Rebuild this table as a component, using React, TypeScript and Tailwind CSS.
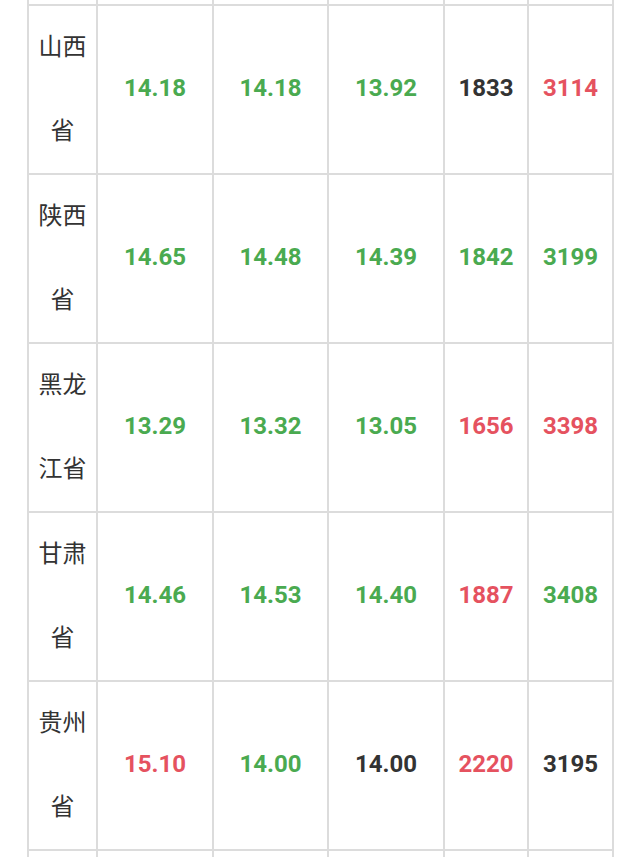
import React from "react";

type C = "g" | "r" | "d";
type Row = { name: string; vals: [string, C][] };

const rows: Row[] = [
  { name: "山西省", vals: [["14.18", "g"], ["14.18", "g"], ["13.92", "g"], ["1833", "d"], ["3114", "r"]] },
  { name: "陕西省", vals: [["14.65", "g"], ["14.48", "g"], ["14.39", "g"], ["1842", "g"], ["3199", "g"]] },
  { name: "黑龙江省", vals: [["13.29", "g"], ["13.32", "g"], ["13.05", "g"], ["1656", "r"], ["3398", "r"]] },
  { name: "甘肃省", vals: [["14.46", "g"], ["14.53", "g"], ["14.40", "g"], ["1887", "r"], ["3408", "g"]] },
  { name: "贵州省", vals: [["15.10", "r"], ["14.00", "g"], ["14.00", "d"], ["2220", "r"], ["3195", "d"]] },
];

const colorCls: Record<C, string> = {
  g: "text-[#4aaa50]",
  r: "text-[#e5525f]",
  d: "text-[#333333]",
};

const gridCls = "grid grid-cols-[69px_116px_115px_116px_84px_87px]";
const cellBase = "border-l-2 border-[#dcdcdc]";
const lastCell = "border-l-2 border-r-2 border-[#dcdcdc]";

function EmptyRow({ h, top }: { h: string; top?: boolean }) {
  return (
    <div className={`${gridCls} ${h} ${top ? "border-t-2 border-[#dcdcdc]" : ""}`}>
      <div className={cellBase} />
      <div className={cellBase} />
      <div className={cellBase} />
      <div className={cellBase} />
      <div className={cellBase} />
      <div className={lastCell} />
    </div>
  );
}

export default function App() {
  return (
    <div className="w-[640px] h-[857px] overflow-hidden bg-white pl-[27px]">
      <div className="w-[587px]">
        <EmptyRow h="h-[4px]" />
        {rows.map((row) => (
          <div key={row.name} className={`${gridCls} h-[169px] border-t-2 border-[#dcdcdc]`}>
            <div
              className={`${cellBase} flex items-center justify-center text-center text-[24px] leading-[83.5px] text-[#333333]`}
              style={{ fontFamily: '"Noto Sans CJK SC", "Noto Sans", sans-serif' }}
            >
              <span className="block w-[48px] break-all -translate-y-[3px]">{row.name}</span>
            </div>
            {row.vals.map(([v, c], i) => (
              <div
                key={i}
                className={`${i === 4 ? lastCell : cellBase} flex items-center justify-center text-[24px] font-bold ${colorCls[c]}`}
                style={{ fontFamily: 'Roboto, "Liberation Sans", sans-serif' }}
              >
                <span className="-translate-y-[2px]">{v}</span>
              </div>
            ))}
          </div>
        ))}
        <EmptyRow h="h-[10px]" top />
      </div>
    </div>
  );
}
